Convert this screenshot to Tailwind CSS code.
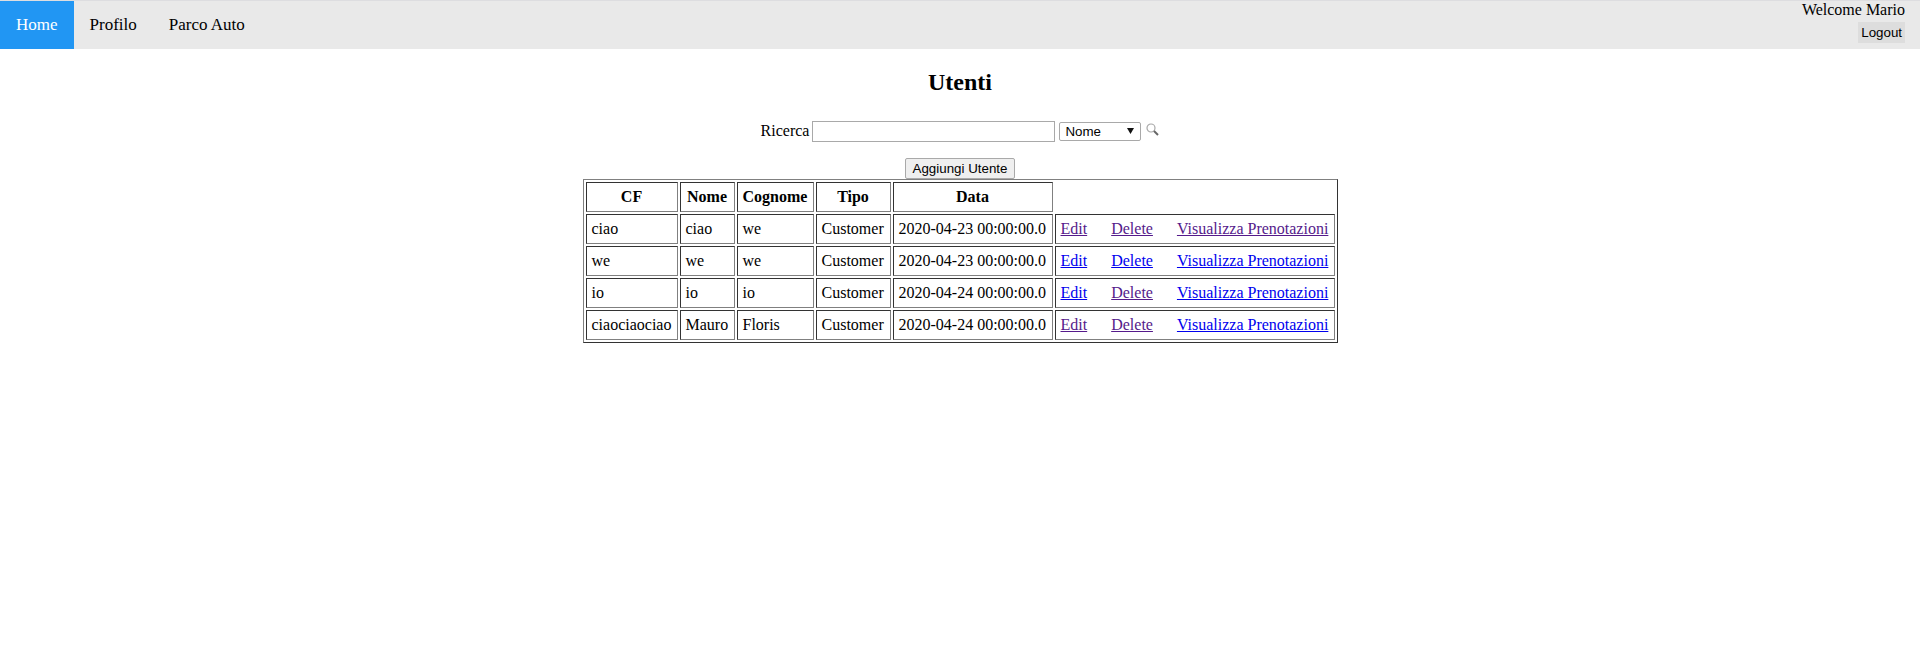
<!DOCTYPE html>
<html lang="it">
<head>
    <meta charset="UTF-8">
    <title>Utenti</title>
    <script src="https://cdn.jsdelivr.net/npm/@tailwindcss/browser@4"></script>
</head>
<body class="bg-white text-black text-base font-['Liberation_Serif',serif]">
    <!-- top nav -->
    <div class="flex justify-between h-[49px] bg-[#e9e9e9] border-t border-[#dddde0]">
        <nav class="flex text-[17px] leading-[20px]">
            <a href="#" class="px-4 py-[14px] bg-[#2196f3] text-white">Home</a>
            <a href="#" class="px-4 py-[14px]">Profilo</a>
            <a href="#" class="px-4 py-[14px]">Parco Auto</a>
        </nav>
        <div class="flex flex-col items-end pr-[15px] leading-[18px]">
            <span>Welcome Mario</span>
            <button class="h-[21px] mt-[3px] px-[3px] bg-[#dddddd] text-[13.33px] leading-[21px] font-['Liberation_Sans',sans-serif]">Logout</button>
        </div>
    </div>

    <h2 class="mt-5 text-center text-2xl leading-[27px] font-bold">Utenti</h2>

    <form class="flex justify-center items-center h-5 mt-[25px]">
        <label for="q">Ricerca</label>
        <input id="q" type="text" class="w-[243px] h-[21px] ml-[3px] px-[2px] bg-white border border-[#a9a9a9] text-[13.33px] font-['Liberation_Sans',sans-serif]">
        <div class="relative ml-1">
            <select class="block w-[82px] h-[19px] pl-[5px] appearance-none bg-white border border-[#a9a9a9] rounded-[2px] text-[13.33px] leading-[17px] font-['Liberation_Sans',sans-serif]">
                <option>Nome</option>
            </select>
            <svg class="absolute right-[7px] top-[6px] w-[7px] h-[6px]" viewBox="0 0 7 6"><path d="M0 0h7L3.5 6z" fill="#111"/></svg>
        </div>
        <svg class="ml-[5px] -mt-[3px] w-[13px] h-[13px]" viewBox="0 0 13 13" fill="none">
            <circle cx="5" cy="5" r="4" stroke="#a8a8a8" stroke-width="1.2"/>
            <path d="M8 8l4 4" stroke="#666" stroke-width="2"/>
        </svg>
    </form>

    <div class="flex justify-center mt-[17px]">
        <button class="h-[21px] px-[7px] bg-[#efefef] border border-[#a9a9a9] rounded-[2px] text-[13.33px] leading-[19px] font-['Liberation_Sans',sans-serif]">Aggiungi Utente</button>
    </div>

    <table class="table-fixed w-[755px] mx-auto border-separate border-spacing-[2px] border border-t-[#808080] border-l-[#808080] border-r-[#333] border-b-[#333] leading-[18px] [&_th]:border [&_td]:border [&_th]:border-t-[#333] [&_th]:border-l-[#333] [&_th]:border-r-[#808080] [&_th]:border-b-[#808080] [&_td]:border-t-[#333] [&_td]:border-l-[#333] [&_td]:border-r-[#808080] [&_td]:border-b-[#808080] [&_th]:p-[5px] [&_td]:p-[5px] [&_a]:underline">
        <colgroup>
            <col class="w-[92px]">
            <col class="w-[55px]">
            <col class="w-[77px]">
            <col class="w-[75px]">
            <col class="w-[160px]">
            <col>
        </colgroup>
        <thead>
            <tr>
                <th class="text-center">CF</th>
                <th class="text-center">Nome</th>
                <th class="text-center">Cognome</th>
                <th class="text-center">Tipo</th>
                <th class="text-center">Data</th>
            </tr>
        </thead>
        <tbody>
            <tr>
                <td>ciao</td>
                <td>ciao</td>
                <td>we</td>
                <td>Customer</td>
                <td>2020-04-23 00:00:00.0</td>
                <td class="whitespace-nowrap"><a href="#" class="text-[#551a8b]">Edit</a><a href="#" class="ml-6 text-[#551a8b]">Delete</a><a href="#" class="ml-6 text-[#551a8b]">Visualizza Prenotazioni</a></td>
            </tr>
            <tr>
                <td>we</td>
                <td>we</td>
                <td>we</td>
                <td>Customer</td>
                <td>2020-04-23 00:00:00.0</td>
                <td class="whitespace-nowrap"><a href="#" class="text-[#0000ee]">Edit</a><a href="#" class="ml-6 text-[#0000ee]">Delete</a><a href="#" class="ml-6 text-[#0000ee]">Visualizza Prenotazioni</a></td>
            </tr>
            <tr>
                <td>io</td>
                <td>io</td>
                <td>io</td>
                <td>Customer</td>
                <td>2020-04-24 00:00:00.0</td>
                <td class="whitespace-nowrap"><a href="#" class="text-[#0000ee]">Edit</a><a href="#" class="ml-6 text-[#551a8b]">Delete</a><a href="#" class="ml-6 text-[#0000ee]">Visualizza Prenotazioni</a></td>
            </tr>
            <tr>
                <td>ciaociaociao</td>
                <td>Mauro</td>
                <td>Floris</td>
                <td>Customer</td>
                <td>2020-04-24 00:00:00.0</td>
                <td class="whitespace-nowrap"><a href="#" class="text-[#551a8b]">Edit</a><a href="#" class="ml-6 text-[#551a8b]">Delete</a><a href="#" class="ml-6 text-[#0000ee]">Visualizza Prenotazioni</a></td>
            </tr>
        </tbody>
    </table>
</body>
</html>
